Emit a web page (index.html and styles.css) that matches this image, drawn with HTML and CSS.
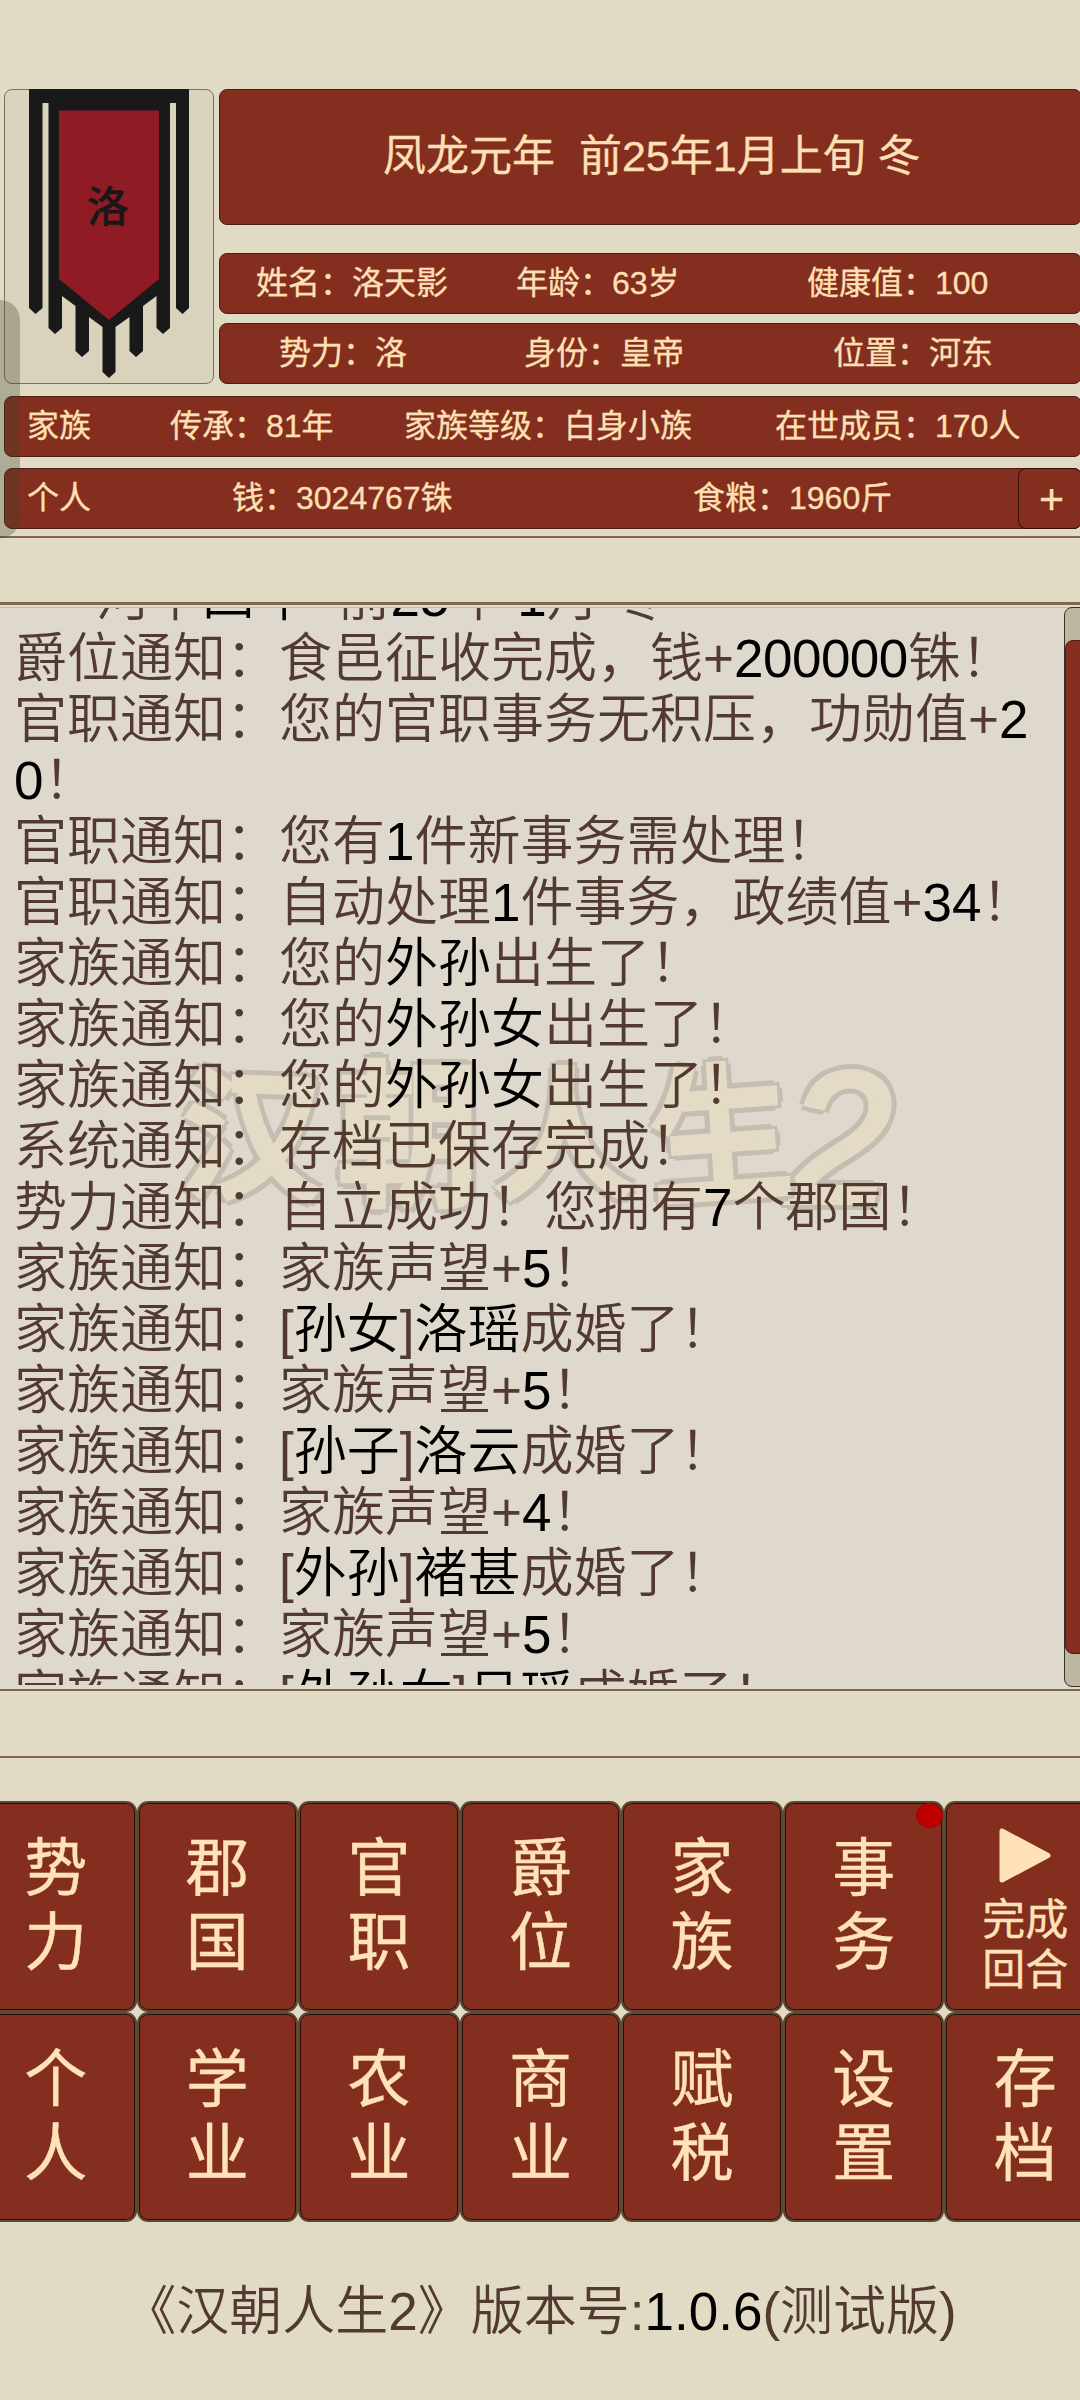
FILE: index.html
```html
<!DOCTYPE html>
<html lang="zh-CN">
<head>
<meta charset="utf-8">
<title>汉朝人生2</title>
<link rel="stylesheet" href="styles.css">
</head>
<body>
<main class="game">
  <header class="status">
    <div class="status-top">
      <div class="flag-card">
        <svg class="flag" viewBox="0 0 160 290" width="160" height="290">
          <path fill="#191919" d="M0 0H160V219L153.500 225L147 219V14H141V239L134 245L127.500 239V207L114 217V262L107 268L100.500 262V228L86.500 238V283L80 289L73.500 283V238L60 228V262L53 268L46.500 262V217L33 207V239L26 245L19.500 239V14H13.500V219L6.500 225L0 219Z"/>
          <path fill="#8f1b24" d="M30 21.500H130V190L80 231L30 190Z"/>
        </svg>
        <span class="flag-name">洛</span>
      </div>
      <div class="status-main">
        <div class="bar bar-date">凤龙元年&nbsp; 前25年1月上旬 冬</div>
        <div class="bar row-name"><span>姓名：洛天影</span><span>年龄：63岁</span><span>健康值：100</span></div>
        <div class="bar row-power"><span>势力：洛</span><span>身份：皇帝</span><span>位置：河东</span></div>
      </div>
    </div>
    <div class="bar row-family"><span>家族</span><span>传承：81年</span><span>家族等级：白身小族</span><span>在世成员：170人</span></div>
    <div class="bar row-personal"><span>个人</span><span>钱：3024767铢</span><span>食粮：1960斤</span><button class="plus">+</button></div>
    <div class="side-handle"></div>
  </header>
  <section class="log">
    <div class="watermark"><span class="wm-han">汉</span><span class="wm-chao">朝</span><span>人</span><span class="wm-sheng">生</span><span class="wm-digit">2</span></div>
    <div class="log-text">
      <p class="log-date">河平<b>四年</b>&nbsp; 前<b>25</b>年&nbsp;<b>1</b>月&nbsp;冬</p>
      <p>爵位通知：食邑征收完成，钱+<b class="amount">200000</b>铢！</p>
      <p>官职通知：您的官职事务无积压，功勋值+<b>20</b>！</p>
      <p>官职通知：您有<b>1</b>件新事务需处理！</p>
      <p>官职通知：自动处理<b>1</b>件事务，政绩值+<b>34</b>！</p>
      <p>家族通知：您的<b>外孙</b>出生了！</p>
      <p>家族通知：您的<b>外孙女</b>出生了！</p>
      <p>家族通知：您的<b>外孙女</b>出生了！</p>
      <p>系统通知：存档已保存完成！</p>
      <p>势力通知：自立成功！您拥有<b>7</b>个郡国！</p>
      <p>家族通知：家族声望+<b>5</b>！</p>
      <p>家族通知：[<b>孙女</b>]<b>洛瑶</b>成婚了！</p>
      <p>家族通知：家族声望+<b>5</b>！</p>
      <p>家族通知：[<b>孙子</b>]<b>洛云</b>成婚了！</p>
      <p>家族通知：家族声望+<b>4</b>！</p>
      <p>家族通知：[<b>外孙</b>]<b>褚甚</b>成婚了！</p>
      <p>家族通知：家族声望+<b>5</b>！</p>
      <p>家族通知：[<b>外孙女</b>]<b>吕瑶</b>成婚了！</p>
    </div>
    <div class="scrollbar"><div class="thumb"></div></div>
  </section>
  <div class="band"></div>
  <nav class="menu">
    <button>势<br>力</button><button>郡<br>国</button><button>官<br>职</button><button>爵<br>位</button><button>家<br>族</button><button class="has-dot">事<br>务<i class="dot"></i></button>
    <button class="finish"><svg width="52" height="55" viewBox="0 0 52 55"><path d="M3 3V52L49 27.500Z" fill="#ffe2b8" stroke="#ffe2b8" stroke-width="5" stroke-linejoin="round"/></svg><span>完成<br>回合</span></button>
    <button>个<br>人</button><button>学<br>业</button><button>农<br>业</button><button>商<br>业</button><button>赋<br>税</button><button>设<br>置</button><button>存<br>档</button>
  </nav>
  <footer class="version">《汉朝人生2》版本号:<b>1.0.6</b>(测试版)</footer>
</main>
</body>
</html>
```
FILE: styles.css
```css
* { box-sizing: border-box; }
body {
  margin: 0;
  background: #e1dbc5;
  font-family: "Liberation Sans", "Noto Sans CJK SC", sans-serif;
}
p { margin: 0; }
b { font-weight: inherit; color: #000; }
button {
  margin: 0;
  padding: 0;
  font: inherit;
  color: inherit;
}
.game {
  width: 1080px;
  height: 2400px;
  overflow: hidden;
  display: flex;
  flex-direction: column;
}
.status {
  position: relative;
  height: 538px;
  padding: 89px 0 0 4px;
  border-bottom: 2px solid #7e654c;
  flex: none;
}
.status-top { display: flex; gap: 5px; height: 295px; }
.flag-card {
  position: relative;
  width: 210px;
  height: 295px;
  flex: none;
  border: 1px solid #77725f;
  border-radius: 8px;
  background: #d9d2bc;
}
.flag { display: block; margin: -1px 0 0 24px; }
.flag-name {
  position: absolute;
  left: 82px;
  top: 88px;
  font-size: 42px;
  line-height: 60px;
  font-weight: 500;
  -webkit-text-stroke: 0.4px #1b1717;
  color: #1b1717;
}
.status-main { width: 863px; flex: none; }
.bar {
  height: 61px;
  border: 1px solid #4d1c14;
  border-radius: 8px;
  background: #842e20;
  color: #ffe0b5;
  font-size: 32px;
  font-weight: 400;
  -webkit-text-stroke: 0.3px #ffe0b5;
  line-height: 59px;
  white-space: nowrap;
}
.bar-date {
  height: 136px;
  padding-left: 163px;
  font-size: 43px;
  line-height: 132px;
}
.row-name, .row-power, .row-family, .row-personal { display: grid; }
.row-name { margin-top: 28px; padding-left: 36px; grid-template-columns: 260px 291px 1fr; }
.row-power { margin-top: 9px; padding-left: 59px; grid-template-columns: 245px 309px 1fr; }
.row-family {
  width: 1078px;
  margin-top: 12px;
  padding-left: 22px;
  grid-template-columns: 143px 234px 371px 1fr;
}
.row-personal {
  width: 1078px;
  margin-top: 11px;
  padding-left: 22px;
  grid-template-columns: 205px 461px 325px 1fr;
}
.plus {
  height: 61px;
  margin: -1px -1px 0 0;
  border: 1px solid #3b0e08;
  border-radius: 8px;
  background: #842e20;
  font-size: 43px;
  line-height: 56px;
  padding-left: 3px;
}
.side-handle {
  position: absolute;
  left: 0;
  top: 300px;
  width: 20px;
  height: 238px;
  border-radius: 0 20px 20px 0;
  background: rgba(60, 62, 42, 0.3);
}
.log {
  position: relative;
  height: 1089px;
  margin-top: 64px;
  border-top: 3px solid #7e654c;
  background: #dfd8cc;
  box-shadow: inset 0 2px 0 #e8d9c6, inset 0 3px 0 #cdb5a5;
  display: flex;
  flex: none;
}
.log-text {
  position: relative;
  width: 1049px;
  height: 1077px;
  margin-top: 3px;
  padding-left: 14px;
  overflow: hidden;
  flex: none;
  font-family: "Liberation Sans", "Noto Sans CJK SC DemiLight", "Noto Sans CJK SC", sans-serif;
  font-size: 53px;
  line-height: 61px;
  font-weight: 350;
  color: #523a30;
  word-break: break-all;
}
.log-text p:first-child { margin-top: -41px; }
.log-date { padding-left: 82px; white-space: nowrap; }
.amount { letter-spacing: -0.5px; }
.watermark {
  position: absolute;
  left: 182px;
  top: 438px;
  display: flex;
  gap: 15px;
  font-size: 141px;
  line-height: 190px;
  font-weight: 500;
  color: #e3dbc5;
  -webkit-text-stroke: 6px #e3dbc5;
  text-shadow: 8px 0 #c4bdb2, -8px 0 #c4bdb2, 0 8px #c4bdb2, 0 -8px #c4bdb2, 6px 6px #c4bdb2, -6px 6px #c4bdb2, 6px -6px #c4bdb2, -6px -6px #c4bdb2;
}
.wm-han { transform: rotate(2deg); }
.wm-chao { transform: scaleY(1.1); }
.wm-sheng { transform: rotate(-4deg) scaleY(1.05); }
.wm-digit { font-size: 186px; font-style: italic; margin-left: -18px; }
.scrollbar {
  width: 24px;
  height: 1080px;
  margin: 2px -8px 0 15px;
  padding-top: 32px;
  border: 1px solid #3a3228;
  border-radius: 8px;
  background: #bdb6a0;
  flex: none;
}
.thumb {
  height: 1014px;
  border: 1px solid #4d1c14;
  border-radius: 8px;
  background: #842e20;
}
.band {
  height: 69px;
  margin-top: -2px;
  border-top: 2px solid #7e654c;
  border-bottom: 2px solid #7e654c;
  background: #e1dbc5;
  position: relative;
  flex: none;
}
.menu {
  width: 1131px;
  height: 421px;
  margin: 43px 0 0 -25px;
  display: grid;
  grid-template-columns: repeat(7, 1fr);
  grid-template-rows: 1fr 1fr;
  flex: none;
}
.menu button {
  position: relative;
  border: 2px solid #5c4935;
  border-radius: 11px;
  background: #842e20;
  box-shadow: inset 0 0 0 1px #2b0d08;
  color: #ffe2b8;
  font-size: 63px;
  font-weight: 400;
  -webkit-text-stroke: 0.4px #ffe2b8;
  line-height: 74px;
  padding-bottom: 2px;
}
.menu .finish {
  display: flex;
  flex-direction: column;
  align-items: center;
  padding: 25px 0 0;
  font-size: 43px;
  line-height: 50px;
}
.finish svg { display: block; }
.finish span { margin-top: 12px; }
.dot {
  position: absolute;
  right: -1px;
  top: 0;
  width: 27px;
  height: 25px;
  border: 1px solid #930a06;
  border-radius: 50%;
  background: #c00000;
}
.version {
  margin-top: 57px;
  text-align: center;
  font-family: "Liberation Sans", "Noto Sans CJK SC DemiLight", "Noto Sans CJK SC", sans-serif;
  font-size: 53px;
  line-height: 66px;
  font-weight: 350;
  color: #523a30;
}
```
